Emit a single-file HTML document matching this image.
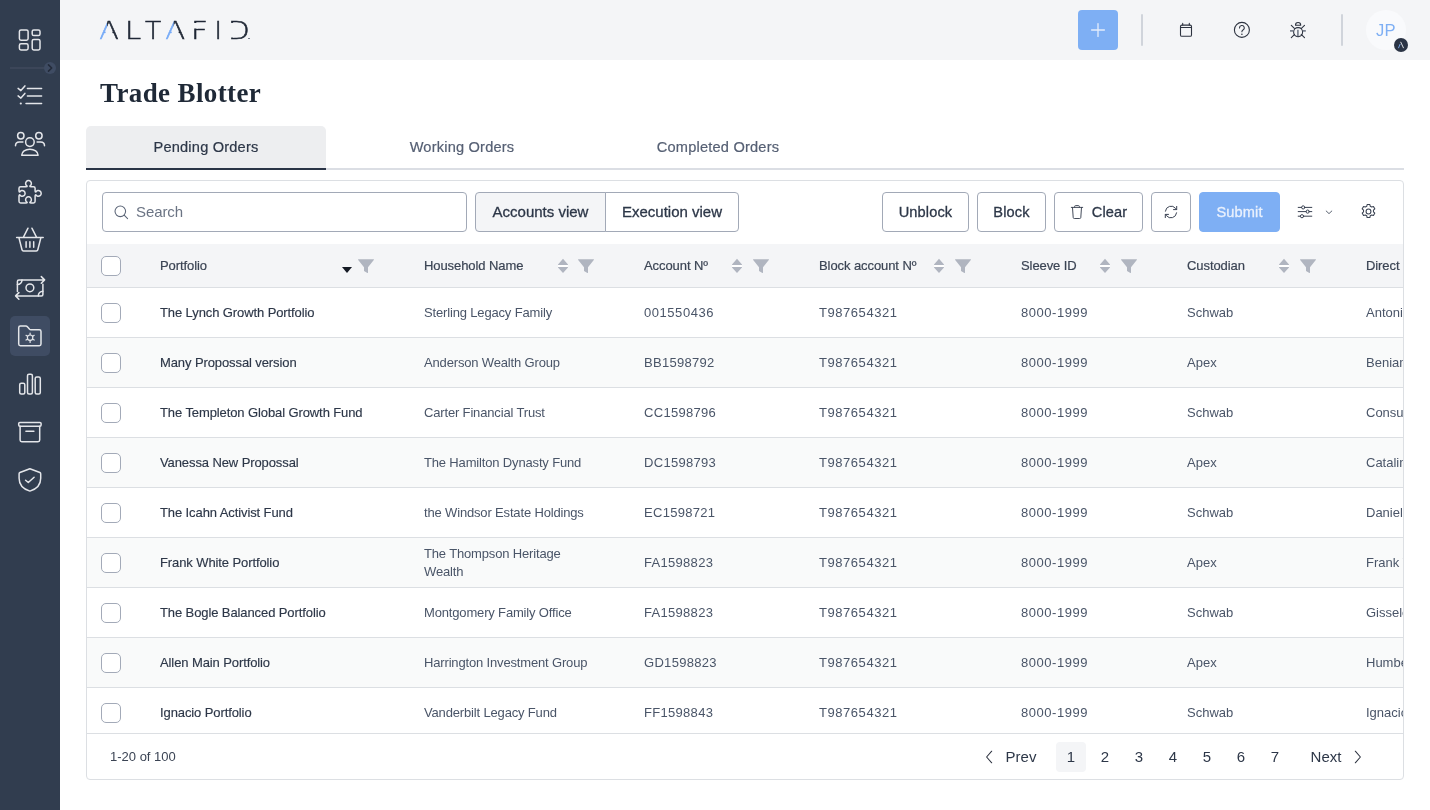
<!DOCTYPE html>
<html lang="en">
<head>
<meta charset="utf-8">
<title>Trade Blotter</title>
<style>
*{box-sizing:border-box;margin:0;padding:0}
html,body{width:1430px;height:810px;overflow:hidden;background:#fff}
body{will-change:transform;font-family:"Liberation Sans",sans-serif;color:#2d3748;position:relative;font-size:13px}
.abs{position:absolute}
#side{position:absolute;left:0;top:0;width:60px;height:810px;background:#313d4f}
#side svg{position:absolute;overflow:visible}
#top{position:absolute;left:60px;top:0;width:1370px;height:60px;background:#f4f5f7}
#logo{position:absolute;left:0;top:0;width:300px;height:60px}
.lg{position:absolute;top:16.3px;-webkit-text-stroke:0.55px #1f2735;font-family:"DejaVu Sans","Liberation Sans",sans-serif;font-weight:200;font-size:25px;line-height:30px;color:#1f2735;transform-origin:0 0;display:block}
.lg.a{background:linear-gradient(90deg,#74a9f7 0,#74a9f7 41%,#1f2735 41%);-webkit-background-clip:text;background-clip:text;color:transparent;-webkit-text-stroke-color:transparent;clip-path:polygon(0 82%,41% 8%,59% 8%,100% 82%,83% 82%,50% 24%,17% 82%)}
h1{position:absolute;left:100px;top:76px;font-family:"Liberation Serif",serif;font-weight:700;font-size:27px;line-height:34px;color:#1f2937;white-space:nowrap;letter-spacing:0.38px}
.tab.on{background:#edeef0;border-bottom:2px solid #2a3446;border-radius:5px 5px 0 0;color:#2d3748}
.tab{position:absolute;top:126px;height:44px;line-height:42px;text-align:center;font-size:14.6px;letter-spacing:0.2px;color:#566074;-webkit-text-stroke:0.2px currentColor;white-space:nowrap}
#panel{position:absolute;left:86px;top:180px;width:1318px;height:600px;border:1px solid #dcdfe3;border-radius:4px;overflow:hidden;background:#fff}
.btn{position:absolute;top:192px;height:40px;border:1px solid #a2a9b7;border-radius:4px;font-size:15px;line-height:38px;text-align:center;color:#2d3748;background:#fff;-webkit-text-stroke:0.3px #2d3748;white-space:nowrap}
.row{position:absolute;left:87px;width:1316px;height:50px;border-bottom:1px solid #dcdfe3;overflow:hidden}
.row.alt{background:#f9fafa}
.c{position:absolute;top:0;height:49px;display:flex;align-items:center;white-space:nowrap;color:#4a5568;font-size:13px}
.c.p{color:#2d3748;-webkit-text-stroke:0.15px #2d3748;letter-spacing:-0.1px}
.cb{position:absolute;left:14px;top:15px;width:20px;height:20px;border:1px solid #a3aab8;border-radius:5px;background:#fff}
#thead{position:absolute;left:87px;top:244px;width:1316px;height:44px;background:#f4f5f7;border-bottom:1px solid #dcdfe3;overflow:hidden}
#thead .c{height:43px}
.c.th{color:#3b4454;-webkit-text-stroke:0.2px #3b4454}
.srt,.flt{position:absolute;top:14px}
#tbody{position:absolute;left:87px;top:288px;width:1316px;height:445px;overflow:hidden}
#tbody .row{left:0}
#tfoot{position:absolute;left:87px;top:733px;width:1316px;height:46px;border-top:1px solid #dcdfe3}
.pg{position:absolute;top:8px;height:30px;line-height:30px;text-align:center;font-size:15px;color:#2d3748;letter-spacing:0}
.c.h{line-height:18px;letter-spacing:-0.16px}
.c.th{letter-spacing:-0.08px}
.btn.m{font-size:14.6px;letter-spacing:0.12px}
.num{letter-spacing:0.55px}
.num2{letter-spacing:0.3px}
</style>
</head>
<body>
<div id="side">
<div class="abs" style="left:10px;top:316px;width:40px;height:40px;border-radius:5px;background:#3f4c63"></div>
<div class="abs" style="left:10px;top:67px;width:40px;height:2px;background:#3c4659"></div>
<div class="abs" style="left:44px;top:62px;width:12px;height:12px;border-radius:6px;background:#3f4c63"></div>
<svg width="60" height="810" viewBox="0 0 60 810" fill="none" stroke="#e4e6ea" stroke-width="1.5" stroke-linecap="round" stroke-linejoin="round" style="left:0;top:0">
<path d="M48.500,64.900 L51.700,68 L48.500,71.100" stroke="#232b3a" stroke-width="1.600"/>
<!-- dashboard -->
<rect x="19.4" y="30" width="8.7" height="10.2" rx="1.6"/>
<rect x="19.4" y="43.8" width="8.7" height="6.1" rx="1.6"/>
<rect x="32.2" y="30" width="7.8" height="5.6" rx="1.6"/>
<rect x="32.2" y="39.5" width="7.8" height="10.4" rx="1.6"/>
<!-- list checks -->
<path d="M18.1,88.4 L20.9,90.6 L24.9,85.9 M18.1,95.9 L20.9,98.1 L24.9,93.4 M27.4,88.4 H41.6 M27.4,96 H41.6 M26,103.5 H41.6"/>
<circle cx="20.8" cy="103.5" r="1.1" fill="#e4e6ea" stroke="none"/>
<!-- users -->
<circle cx="29.9" cy="142.1" r="4.3"/>
<path d="M21.7,155.2 a8.2,6 0 0 1 16.4,0 Z"/>
<circle cx="20.8" cy="135.8" r="3.2"/>
<circle cx="38.9" cy="135.8" r="3.2"/>
<path d="M15.5,145.8 c0,-2.6 1.6,-3.8 3.8,-3.8 h3.6 M44.5,145.8 c0,-2.6 -1.6,-3.8 -3.8,-3.8 h-3.6"/>
<!-- puzzle -->
<path d="M20.60,186.70 L25.80,186.70 Q27.10,186.70 27.20,186.10 A2.90,2.90 0 1 1 29.80,186.10 Q29.90,186.70 31.20,186.70 L33.50,186.70 Q35.10,186.70 35.10,188.30 L35.10,190.70 Q35.10,192.00 35.70,192.10 A2.90,2.90 0 1 1 35.70,194.70 Q35.10,194.80 35.10,196.10 L35.10,201.30 Q35.10,202.90 33.50,202.90 L31.20,202.90 Q29.90,202.90 29.80,202.30 A2.90,2.90 0 1 0 27.20,202.30 Q27.10,202.90 25.80,202.90 L20.60,202.90 Q19.00,202.90 19.00,201.30 L19.00,196.10 Q19.00,194.80 19.60,194.70 A2.90,2.90 0 1 0 19.60,192.10 Q19.00,192.00 19.00,190.70 L19.00,188.30 Q19.00,186.70 20.60,186.70 Z"/>
<!-- basket -->
<path d="M16.6,237.6 H43.2 M18.9,237.6 L22,249.7 a1.6,1.6 0 0 0 1.5,1.2 H36.3 a1.6,1.6 0 0 0 1.5,-1.2 L40.9,237.6 M23.3,237.3 L28,228.2 M36.6,237.3 L31.9,228.2 M26.1,241.7 V247.2 M29.9,241.7 V247.2 M33.7,241.7 V247.2"/>
<!-- cash -->
<path d="M17.4,291.5 V281.4 a1.5,1.5 0 0 1 1.5,-1.5 H44.4 M41.3,276.6 L44.6,279.9 L41.3,283.2 M42.9,284.3 V294.4 a1.5,1.5 0 0 1 -1.5,1.5 H15.8 M18.9,292.6 L15.6,295.9 L18.9,299.2"/>
<circle cx="29.9" cy="287.8" r="3.9"/>
<path d="M17.4,284.6 a4.6,4.6 0 0 0 4.6,-4.7 M42.9,291.2 a4.6,4.6 0 0 0 -4.6,4.7"/>
<!-- folder gear -->
<path d="M18.7,327.8 a1.7,1.7 0 0 1 1.7,-1.7 h5.6 a1.7,1.7 0 0 1 1.2,0.5 l2.4,2.6 a1.7,1.7 0 0 0 1.2,0.5 h8.5 a1.7,1.7 0 0 1 1.7,1.7 v12.6 a1.7,1.7 0 0 1 -1.7,1.7 h-18.9 a1.7,1.7 0 0 1 -1.7,-1.7 Z"/>
<circle cx="30.1" cy="337.7" r="2.7" stroke-width="1.2"/>
<path d="M30.1,334.6 V333 M30.1,340.8 V342.4 M32.8,336.15 L34.2,335.35 M27.4,339.25 L26,340.05 M32.8,339.25 L34.2,340.05 M27.4,336.15 L26,335.35" stroke-width="1.2"/>
<!-- bars -->
<rect x="19.7" y="383.3" width="5.1" height="10.6" rx="1.5"/>
<rect x="27.5" y="374.2" width="4.9" height="19.7" rx="1.5"/>
<rect x="35.2" y="377" width="5.1" height="16.9" rx="1.5"/>
<!-- archive -->
<rect x="18.7" y="422.4" width="22.4" height="3.8" rx="1.2"/>
<path d="M20.1,426.2 V440.1 a1.7,1.7 0 0 0 1.7,1.7 H38 a1.7,1.7 0 0 0 1.7,-1.7 V426.2 M25.9,431.2 H33.9"/>
<!-- shield -->
<path d="M29.9,468.7 L39.9,472.5 a1.3,1.3 0 0 1 0.8,1.2 V478.2 c0,7.2 -5.2,11.2 -10.8,12.9 c-5.600,-1.700 -10.800,-5.700 -10.800,-12.900 V473.700 a1.3,1.3 0 0 1 0.8,-1.2 Z"/>
<path d="M25.6,480.2 L28.3,482.5 L34.1,477.2"/>
</svg>
</div>
<div id="top">
<div id="logo" aria-label="ALTAFID">
<span class="lg a" style="left:39px;transform:scaleX(1.17)">A</span>
<span class="lg" style="left:64.9px;transform:scaleX(1.16)">L</span>
<span class="lg" style="left:84.8px;transform:scaleX(1.06)">T</span>
<span class="lg a" style="left:104.8px;transform:scaleX(1.19)">A</span>
<span class="lg" style="left:131px;transform:scaleX(1.17);clip-path:polygon(0 0,100% 0,100% 100%,0 100%,0 12.1px,6px 12.1px,6px 6.7px,0 6.7px)">F</span>
<span class="lg" style="left:154.5px">I</span>
<span class="lg" style="left:167.8px;transform:scaleX(1.125);clip-path:polygon(0 0,100% 0,100% 100%,0 100%,0 21.2px,5.5px 21.2px,5.5px 6.7px,0 6.7px)">D</span>
<span class="abs" style="left:188px;top:37.600px;width:1.600px;height:1.600px;border-radius:1px;background:#6b7280"></span>
</div>
<div class="abs" style="left:1018px;top:10px;width:40px;height:40px;border-radius:4px;background:#7eaff4"></div>
<svg class="abs" style="left:1018px;top:10px" width="40" height="40" viewBox="0 0 40 40" fill="none" stroke="#e4edfc" stroke-width="1.3" stroke-linecap="round"><path d="M13.6,20 H26.4 M20,13.6 V26.4"/></svg>
<div class="abs" style="left:1081px;top:14px;width:2px;height:32px;background:#d0d4db;border-radius:1px"></div>
<div class="abs" style="left:1281px;top:14px;width:2px;height:32px;background:#d0d4db;border-radius:1px"></div>
<svg class="abs" style="left:1106px;top:10px" width="160" height="40" viewBox="0 0 160 40" fill="none" stroke="#2d3340" stroke-width="1.25" stroke-linecap="round" stroke-linejoin="round">
<!-- calendar -->
<rect x="14.5" y="15.100" width="11" height="11.200" rx="1.400" stroke-width="1.100"/>
<path d="M14.500,17.500 H25.500 M16.700,13.400 V15 M23.300,13.400 V15" stroke-width="1.100"/>
<!-- question -->
<circle cx="75.900" cy="19.900" r="7.500" stroke-width="1.100"/>
<path d="M73.500,17.900 a2.400,2.400 0 1 1 3.500,2.100 c-0.800,0.500 -1.100,0.900 -1.100,1.800" stroke-width="1.100"/>
<circle cx="75.900" cy="24.200" r="0.800" fill="#2d3340" stroke="none"/>
<!-- bug -->
<path d="M129.500,15.200 a2.600,2.700 0 0 1 5.200,0 Z" stroke-width="1.100"/>
<rect x="127.600" y="17.600" width="9" height="9" rx="4.300" ry="4.500" stroke-width="1.100"/>
<path d="M131.900,19.800 V26.200 M124,20.900 H127.400 M136.800,20.900 H139.800" stroke="#7b8290" stroke-width="1.700" stroke-linecap="butt"/>
<path d="M125.300,15.300 L128.400,18.400 M138.500,15.300 L135.400,18.400 M125.300,27.600 L128.600,24.400 M138.500,27.600 L135.200,24.400" stroke-width="1.100"/>
</svg>
<div class="abs" style="left:1306px;top:10px;width:40px;height:40px;border-radius:20px;background:#f9fafc;color:#7eaff4;font-size:16.6px;line-height:41px;text-align:center;letter-spacing:0.3px">JP</div>
<div class="abs" style="left:1334px;top:38px;width:14px;height:14px;border-radius:7px;background:#2b3445"></div>
<svg class="abs" style="left:1334px;top:38px" width="14" height="14" viewBox="0 0 14 14" fill="none" stroke-width="0.9" stroke-linecap="round"><path d="M4.600,9.800 L6,6.400" stroke="#7eaff4"/><path d="M6.800,4.200 L9.400,9.800" stroke="#f1f3f6"/></svg>
</div>
<h1>Trade Blotter</h1>
<div id="tabs">
<div class="abs" style="left:86px;top:168px;width:1318px;height:2px;background:#dbdee4"></div>
<div class="tab on" style="left:86px;width:240px">Pending Orders</div>
<div class="tab" style="left:342px;width:240px">Working Orders</div>
<div class="tab" style="left:598px;width:240px">Completed Orders</div>
</div>
<div id="panel"></div>
<div id="tools">
<div class="abs" style="left:102px;top:192px;width:365px;height:40px;border:1px solid #a2a9b7;border-radius:4px;background:#fff"></div>
<svg class="abs" style="left:112px;top:203px" width="18" height="18" viewBox="0 0 18 18" fill="none" stroke="#5b6577" stroke-width="1.050" stroke-linecap="round"><circle cx="8.300" cy="8.300" r="5.300"/><path d="M12.200,12.200 L15.600,15.600"/></svg>
<div class="abs" style="left:136px;top:192px;height:40px;line-height:40px;font-size:15px;color:#6b7484;letter-spacing:-0.1px">Search</div>
<div class="btn" style="left:475px;width:131px;border-radius:4px 0 0 4px;background:#f4f5f7">Accounts view</div>
<div class="btn" style="left:605px;width:134px;border-radius:0 4px 4px 0">Execution view</div>
<div class="btn m" style="left:882px;width:87px">Unblock</div>
<div class="btn m" style="left:977px;width:69px">Block</div>
<div class="btn m" style="left:1054px;width:89px;padding-left:22px">Clear</div>
<svg class="abs" style="left:1068px;top:203px" width="18" height="18" viewBox="0 0 18 18" fill="none" stroke="#3a4252" stroke-width="0.950" stroke-linecap="round" stroke-linejoin="round"><path d="M3.300,4.400 H14.700 M6.600,4.200 V3.600 a1,1 0 0 1 1,-1 h2.800 a1,1 0 0 1 1,1 V4.200 M4.500,4.600 L5.200,14.500 a1.100,1.100 0 0 0 1.100,1 h5.400 a1.100,1.100 0 0 0 1.100,-1 L13.500,4.600"/></svg>
<div class="btn" style="left:1151px;width:40px"></div>
<svg class="abs" style="left:1162px;top:203px" width="18" height="18" viewBox="0 0 18 18" fill="none" stroke="#3a4252" stroke-width="1" stroke-linecap="round" stroke-linejoin="round"><path d="M3.400,8.200 a5.700,5.700 0 0 1 10.100,-2.900 l1.100,1.200 M14.700,3.400 V6.600 H11.500 M14.600,9.800 a5.700,5.700 0 0 1 -10.100,2.900 l-1.100,-1.200 M3.300,14.600 V11.400 H6.500"/></svg>
<div class="btn m" style="left:1199px;width:81px;background:#7eaff4;border-color:#7eaff4;color:#eaf1fd;-webkit-text-stroke:0.3px #eaf1fd">Submit</div>
<svg class="abs" style="left:1296px;top:203px" width="18" height="18" viewBox="0 0 18 18" fill="none" stroke="#3a4252" stroke-width="1" stroke-linecap="round"><path d="M2.200,4.400 H5.600 M8.800,4.400 H15.800 M2.200,8.600 H10.100 M13.300,8.600 H15.800 M2.200,13.200 H4.400 M7.600,13.200 H15.800"/><circle cx="7.200" cy="4.400" r="1.600"/><circle cx="11.700" cy="8.600" r="1.600"/><circle cx="6" cy="13.200" r="1.600"/></svg>
<svg class="abs" style="left:1323.500px;top:207.300px" width="10" height="10" viewBox="0 0 10 10" fill="none" stroke="#5b6472" stroke-width="1" stroke-linecap="round" stroke-linejoin="round"><path d="M2.200,4 L5,6.600 L7.800,4"/></svg>
<svg class="abs" style="left:1358.600px;top:202.300px" width="19" height="19" viewBox="0 0 18 18" fill="none" stroke="#3a4252" stroke-width="1" stroke-linejoin="round"><circle cx="9" cy="9" r="2.300"/><path d="M7.700,2.400 h2.600 l0.400,1.700 l1.300,0.700 l1.700,-0.500 l1.300,2.200 l-1.300,1.300 v1.500 l1.300,1.200 l-1.300,2.300 l-1.700,-0.500 l-1.300,0.700 l-0.400,1.700 h-2.600 l-0.400,-1.700 l-1.300,-0.700 l-1.700,0.500 l-1.300,-2.300 l1.300,-1.200 v-1.500 l-1.300,-1.300 l1.300,-2.200 l1.700,0.500 l1.300,-0.700 Z"/></svg>
</div>
<div id="thead">
<div class="cb" style="top:12px"></div>
<div class="c th" style="left:73px">Portfolio</div>
<svg class="flt" style="left:270px" width="18" height="16" viewBox="0 0 18 16"><path d="M1.500,1.200 H16.500 Q17.400,1.200 16.800,2 L11,9.300 V14.600 Q11,15.300 10.400,14.900 L7,13 V9.300 L1.200,2 Q0.600,1.200 1.500,1.200 Z" fill="#b0b5c0"/></svg>
<div class="c th" style="left:337px">Household Name</div>
<svg class="srt" style="left:471px" width="10" height="16" viewBox="0 0 10 16"><path d="M0,6.800 H10 V9.100 H0 Z" fill="#fff"/><path d="M5,0.800 L10,6.400 V6.900 H0 V6.400 Z M5,15.100 L0,9.600 V9.100 H10 V9.600 Z" fill="#b0b5c0"/></svg>
<svg class="flt" style="left:490px" width="18" height="16" viewBox="0 0 18 16"><path d="M1.500,1.200 H16.500 Q17.400,1.200 16.800,2 L11,9.300 V14.600 Q11,15.300 10.400,14.900 L7,13 V9.300 L1.200,2 Q0.600,1.200 1.500,1.200 Z" fill="#b0b5c0"/></svg>
<div class="c th" style="left:557px">Account Nº</div>
<svg class="srt" style="left:645px" width="10" height="16" viewBox="0 0 10 16"><path d="M0,6.800 H10 V9.100 H0 Z" fill="#fff"/><path d="M5,0.800 L10,6.400 V6.900 H0 V6.400 Z M5,15.100 L0,9.600 V9.100 H10 V9.600 Z" fill="#b0b5c0"/></svg>
<svg class="flt" style="left:665px" width="18" height="16" viewBox="0 0 18 16"><path d="M1.500,1.200 H16.500 Q17.400,1.200 16.800,2 L11,9.300 V14.600 Q11,15.300 10.400,14.900 L7,13 V9.300 L1.200,2 Q0.600,1.200 1.500,1.200 Z" fill="#b0b5c0"/></svg>
<div class="c th" style="left:732px">Block account Nº</div>
<svg class="srt" style="left:847px" width="10" height="16" viewBox="0 0 10 16"><path d="M0,6.800 H10 V9.100 H0 Z" fill="#fff"/><path d="M5,0.800 L10,6.400 V6.900 H0 V6.400 Z M5,15.100 L0,9.600 V9.100 H10 V9.600 Z" fill="#b0b5c0"/></svg>
<svg class="flt" style="left:867px" width="18" height="16" viewBox="0 0 18 16"><path d="M1.500,1.200 H16.500 Q17.400,1.200 16.800,2 L11,9.300 V14.600 Q11,15.300 10.400,14.900 L7,13 V9.300 L1.200,2 Q0.600,1.200 1.500,1.200 Z" fill="#b0b5c0"/></svg>
<div class="c th" style="left:934px">Sleeve ID</div>
<svg class="srt" style="left:1013px" width="10" height="16" viewBox="0 0 10 16"><path d="M0,6.800 H10 V9.100 H0 Z" fill="#fff"/><path d="M5,0.800 L10,6.400 V6.900 H0 V6.400 Z M5,15.100 L0,9.600 V9.100 H10 V9.600 Z" fill="#b0b5c0"/></svg>
<svg class="flt" style="left:1033px" width="18" height="16" viewBox="0 0 18 16"><path d="M1.500,1.200 H16.500 Q17.400,1.200 16.800,2 L11,9.300 V14.600 Q11,15.300 10.400,14.900 L7,13 V9.300 L1.200,2 Q0.600,1.200 1.500,1.200 Z" fill="#b0b5c0"/></svg>
<div class="c th" style="left:1100px">Custodian</div>
<svg class="srt" style="left:1192px" width="10" height="16" viewBox="0 0 10 16"><path d="M0,6.800 H10 V9.100 H0 Z" fill="#fff"/><path d="M5,0.800 L10,6.400 V6.900 H0 V6.400 Z M5,15.100 L0,9.600 V9.100 H10 V9.600 Z" fill="#b0b5c0"/></svg>
<svg class="flt" style="left:1212px" width="18" height="16" viewBox="0 0 18 16"><path d="M1.500,1.200 H16.500 Q17.400,1.200 16.800,2 L11,9.300 V14.600 Q11,15.300 10.400,14.900 L7,13 V9.300 L1.200,2 Q0.600,1.200 1.500,1.200 Z" fill="#b0b5c0"/></svg>
<div class="c th" style="left:1279px">Direct Owner</div>
<svg class="srt" style="left:254px" width="12" height="16" viewBox="0 0 12 16"><path d="M1,9 H11 L6,15.100 Z" fill="#151a24"/></svg>
</div>
<div id="tbody">
<div class="row" style="top:0px">
<div class="cb"></div>
<div class="c p" style="left:73px">The Lynch Growth Portfolio</div>
<div class="c h" style="left:337px">Sterling Legacy Family</div>
<div class="c num" style="left:557px">001550436</div>
<div class="c num" style="left:732px">T987654321</div>
<div class="c num" style="left:934px">8000-1999</div>
<div class="c" style="left:1100px">Schwab</div>
<div class="c" style="left:1279px">Antonio Lynch</div>
</div>
<div class="row alt" style="top:50px">
<div class="cb"></div>
<div class="c p" style="left:73px">Many Propossal version</div>
<div class="c h" style="left:337px">Anderson Wealth Group</div>
<div class="c num2" style="left:557px">BB1598792</div>
<div class="c num" style="left:732px">T987654321</div>
<div class="c num" style="left:934px">8000-1999</div>
<div class="c" style="left:1100px">Apex</div>
<div class="c" style="left:1279px">Beniamin Many</div>
</div>
<div class="row" style="top:100px">
<div class="cb"></div>
<div class="c p" style="left:73px">The Templeton Global Growth Fund</div>
<div class="c h" style="left:337px">Carter Financial Trust</div>
<div class="c num2" style="left:557px">CC1598796</div>
<div class="c num" style="left:732px">T987654321</div>
<div class="c num" style="left:934px">8000-1999</div>
<div class="c" style="left:1100px">Schwab</div>
<div class="c" style="left:1279px">Consuelo Templeton</div>
</div>
<div class="row alt" style="top:150px">
<div class="cb"></div>
<div class="c p" style="left:73px">Vanessa New Propossal</div>
<div class="c h" style="left:337px">The Hamilton Dynasty Fund</div>
<div class="c num2" style="left:557px">DC1598793</div>
<div class="c num" style="left:732px">T987654321</div>
<div class="c num" style="left:934px">8000-1999</div>
<div class="c" style="left:1100px">Apex</div>
<div class="c" style="left:1279px">Catalina Vanessa</div>
</div>
<div class="row" style="top:200px">
<div class="cb"></div>
<div class="c p" style="left:73px">The Icahn Activist Fund</div>
<div class="c h" style="left:337px">the Windsor Estate Holdings</div>
<div class="c num2" style="left:557px">EC1598721</div>
<div class="c num" style="left:732px">T987654321</div>
<div class="c num" style="left:934px">8000-1999</div>
<div class="c" style="left:1100px">Schwab</div>
<div class="c" style="left:1279px">Daniel Icahn</div>
</div>
<div class="row alt" style="top:250px">
<div class="cb"></div>
<div class="c p" style="left:73px">Frank White Portfolio</div>
<div class="c h" style="left:337px">The Thompson Heritage<br>Wealth</div>
<div class="c num2" style="left:557px">FA1598823</div>
<div class="c num" style="left:732px">T987654321</div>
<div class="c num" style="left:934px">8000-1999</div>
<div class="c" style="left:1100px">Apex</div>
<div class="c" style="left:1279px">Frank White</div>
</div>
<div class="row" style="top:300px">
<div class="cb"></div>
<div class="c p" style="left:73px">The Bogle Balanced Portfolio</div>
<div class="c h" style="left:337px">Montgomery Family Office</div>
<div class="c num2" style="left:557px">FA1598823</div>
<div class="c num" style="left:732px">T987654321</div>
<div class="c num" style="left:934px">8000-1999</div>
<div class="c" style="left:1100px">Schwab</div>
<div class="c" style="left:1279px">Gissele Bogle</div>
</div>
<div class="row alt" style="top:350px">
<div class="cb"></div>
<div class="c p" style="left:73px">Allen Main Portfolio</div>
<div class="c h" style="left:337px">Harrington Investment Group</div>
<div class="c num2" style="left:557px">GD1598823</div>
<div class="c num" style="left:732px">T987654321</div>
<div class="c num" style="left:934px">8000-1999</div>
<div class="c" style="left:1100px">Apex</div>
<div class="c" style="left:1279px">Humberto Allen</div>
</div>
<div class="row" style="top:400px">
<div class="cb"></div>
<div class="c p" style="left:73px">Ignacio Portfolio</div>
<div class="c h" style="left:337px">Vanderbilt Legacy Fund</div>
<div class="c num2" style="left:557px">FF1598843</div>
<div class="c num" style="left:732px">T987654321</div>
<div class="c num" style="left:934px">8000-1999</div>
<div class="c" style="left:1100px">Schwab</div>
<div class="c" style="left:1279px">Ignacio Perez</div>
</div>
</div>
<div id="tfoot">
<div class="abs" style="left:23px;top:0;height:45px;line-height:45px;font-size:13px;color:#3b4454;letter-spacing:0">1-20 of 100</div>
<svg class="abs" style="left:897px;top:15px" width="10" height="16" viewBox="0 0 10 16" fill="none" stroke="#2d3340" stroke-width="1.050" stroke-linecap="round" stroke-linejoin="round"><path d="M7.700,2.200 L2.600,8 L7.700,13.800"/></svg>
<div class="pg" style="left:914px;width:40px">Prev</div>
<div class="abs" style="left:969px;top:8px;width:30px;height:30px;border-radius:4px;background:#f4f5f7"></div>
<div class="pg" style="left:969px;width:30px">1</div>
<div class="pg" style="left:1003px;width:30px">2</div>
<div class="pg" style="left:1037px;width:30px">3</div>
<div class="pg" style="left:1071px;width:30px">4</div>
<div class="pg" style="left:1105px;width:30px">5</div>
<div class="pg" style="left:1139px;width:30px">6</div>
<div class="pg" style="left:1173px;width:30px">7</div>
<div class="pg" style="left:1219px;width:40px">Next</div>
<svg class="abs" style="left:1266px;top:15px" width="10" height="16" viewBox="0 0 10 16" fill="none" stroke="#2d3340" stroke-width="1.050" stroke-linecap="round" stroke-linejoin="round"><path d="M2.300,2.200 L7.400,8 L2.300,13.800"/></svg>
</div>
</body>
</html>
